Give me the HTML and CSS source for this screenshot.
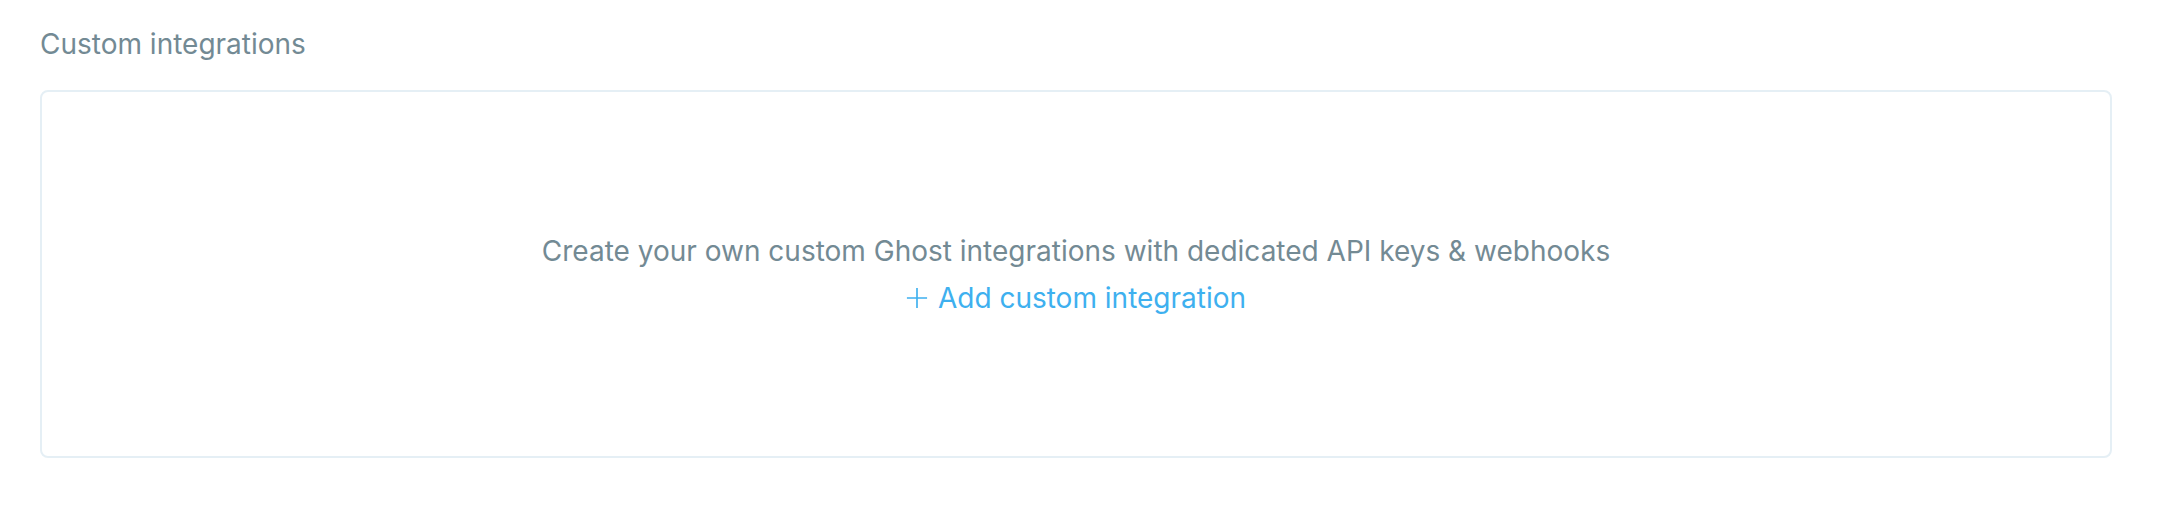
FILE: index.html
```html
<!DOCTYPE html>
<html lang="en">
<head>
<meta charset="utf-8">
<title>Custom integrations</title>
<link rel="stylesheet" href="styles.css">
</head>
<body>
<section class="section">
  <h2 class="section-title">Custom integrations</h2>
  <div class="panel">
    <p class="panel-text">Create your own custom Ghost integrations with dedicated API keys &amp; webhooks</p>
    <a class="add-link" href="#">
      <svg class="add-icon" viewBox="0 0 24 24" width="22" height="24" aria-hidden="true">
        <path d="M12 1v22M1 12h22" stroke="currentColor" stroke-width="1.8" fill="none"/>
      </svg>
      <span>Add custom integration</span>
    </a>
  </div>
</section>
</body>
</html>
```
FILE: styles.css
```css
html, body {
  margin: 0;
  padding: 0;
  background: #ffffff;
}

body {
  font-family: Inter, "Noto Sans", "Liberation Sans", sans-serif;
  color: #738a94;
}

.section {
  padding: 27px 52px 0 40px;
}

.section-title {
  margin: 0 0 29px 0;
  font-size: 28px;
  font-weight: 400;
  line-height: 34px;
  color: #738a94;
  letter-spacing: 0;
}

.panel {
  box-sizing: border-box;
  height: 368px;
  border: 2px solid #e5eff5;
  border-radius: 8px;
  background: #ffffff;
  display: flex;
  flex-direction: column;
  align-items: center;
  justify-content: center;
  gap: 13px;
}

.panel-text {
  margin: 0;
  font-size: 28px;
  line-height: 34px;
  color: #738a94;
}

.add-link {
  display: flex;
  align-items: center;
  gap: 10px;
  font-size: 28px;
  line-height: 34px;
  color: #3eb0ef;
  text-decoration: none;
}

.add-icon {
  display: block;
}
```
